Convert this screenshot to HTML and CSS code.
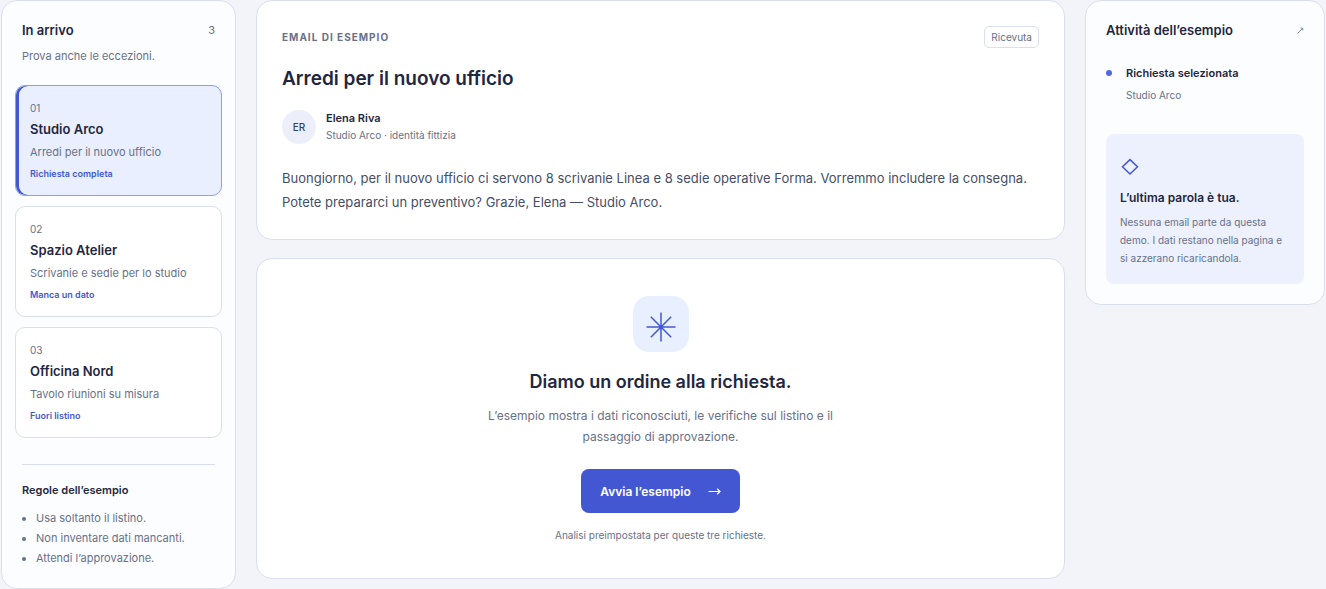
FILE: index.html
```
<!DOCTYPE html>
<html lang="it">
<head>
  <meta charset="UTF-8">
  <meta name="viewport" content="width=device-width, initial-scale=1">
  <title>Demo preventivi</title>
  <link rel="stylesheet" href="styles.css">
</head>
<body>
  <div class="workspace">

    <!-- Inbox -->
    <aside class="panel inbox">
      <div class="panel-head">
        <h2>In arrivo</h2>
        <span class="count">3</span>
      </div>
      <p class="inbox-hint">Prova anche le eccezioni.</p>

      <div class="request-list">
        <button type="button" class="request active" aria-pressed="true">
          <span class="request-number">01</span>
          <strong>Studio Arco</strong>
          <span class="request-subject">Arredi per il nuovo ufficio</span>
          <span class="request-tag">Richiesta completa</span>
        </button>
        <button type="button" class="request" aria-pressed="false">
          <span class="request-number">02</span>
          <strong>Spazio Atelier</strong>
          <span class="request-subject">Scrivanie e sedie per lo studio</span>
          <span class="request-tag">Manca un dato</span>
        </button>
        <button type="button" class="request" aria-pressed="false">
          <span class="request-number">03</span>
          <strong>Officina Nord</strong>
          <span class="request-subject">Tavolo riunioni su misura</span>
          <span class="request-tag">Fuori listino</span>
        </button>
      </div>

      <div class="rules">
        <h3>Regole dell’esempio</h3>
        <ul>
          <li>Usa soltanto il listino.</li>
          <li>Non inventare dati mancanti.</li>
          <li>Attendi l’approvazione.</li>
        </ul>
      </div>
    </aside>

    <main class="content">
      <!-- Email -->
      <article class="card email">
        <div class="email-top">
          <span class="eyebrow">Email di esempio</span>
          <span class="badge">Ricevuta</span>
        </div>
        <h1>Arredi per il nuovo ufficio</h1>
        <div class="sender">
          <span class="avatar">ER</span>
          <div class="sender-info">
            <strong>Elena Riva</strong>
            <span>Studio Arco · identità fittizia</span>
          </div>
        </div>
        <p class="email-body">Buongiorno, per il nuovo ufficio ci servono 8 scrivanie Linea e 8 sedie operative Forma. Vorremmo includere la consegna. Potete prepararci un preventivo? Grazie, Elena — Studio Arco.</p>
      </article>

      <!-- Start -->
      <section class="card start">
        <div class="start-icon">
          <svg width="32" height="32" viewBox="0 0 32 32" fill="none" stroke="currentColor" stroke-width="1.5" aria-hidden="true">
            <path d="M16 1.5v29M1.5 16h29M5.8 5.8l20.4 20.4M26.2 5.8L5.8 26.2"/>
          </svg>
        </div>
        <h2>Diamo un ordine alla richiesta.</h2>
        <p>L’esempio mostra i dati riconosciuti, le verifiche sul listino e il passaggio di approvazione.</p>
        <button type="button" class="start-button">
          Avvia l’esempio
          <svg width="14" height="10" viewBox="0 0 14 10" fill="none" stroke="currentColor" stroke-width="1.2" aria-hidden="true">
            <path d="M1.5 5.5H13M10.2 2.8l2.8 2.7-2.8 2.7"/>
          </svg>
        </button>
        <small>Analisi preimpostata per queste tre richieste.</small>
      </section>
    </main>

    <!-- Activity -->
    <aside class="panel activity">
      <div class="panel-head">
        <h2>Attività dell’esempio</h2>
        <svg width="8" height="8" viewBox="0 0 8 8" fill="none" stroke="currentColor" aria-hidden="true">
          <path d="M1.5 7.5l5-5M4.6 2.2h2.2v2.2" stroke-width="0.8"/>
        </svg>
      </div>
      <ol class="timeline">
        <li>
          <strong>Richiesta selezionata</strong>
          <span>Studio Arco</span>
        </li>
      </ol>
      <div class="notice">
        <svg width="20" height="20" viewBox="0 0 20 20" fill="none" stroke="currentColor" stroke-width="1.5" aria-hidden="true">
          <path d="M10 2.6l7.5 7.2-7.5 7.2-7.5-7.2z"/>
        </svg>
        <h3>L’ultima parola è tua.</h3>
        <p>Nessuna email parte da questa demo. I dati restano nella pagina e si azzerano ricaricandola.</p>
      </div>
    </aside>

  </div>
</body>
</html>
```
FILE: styles.css
```
:root {
  --ink: #1f2740;
  --muted: #68708a;
  --line: #d9dfee;
  --blue: #4457d2;
}

* {
  box-sizing: border-box;
}

body {
  margin: 0;
  background-color: #f3f4fa;
  color: var(--ink);
  font-family: Inter, "Liberation Sans", sans-serif;
  font-size: 13px;
}

h1, h2, h3, p, ul, ol {
  margin: 0;
}

button {
  font-family: inherit;
  cursor: pointer;
}

.workspace {
  display: grid;
  grid-template-columns: 235px minmax(0, 1fr) 240px;
  gap: 20px;
  align-items: start;
  padding: 0 1px;
}

.panel, .card {
  border: 1px solid var(--line);
  border-radius: 16px;
}

.panel {
  background-color: #fcfdff;
}

.card {
  background-color: #fff;
}

.panel-head {
  display: flex;
  justify-content: space-between;
  align-items: center;
  color: var(--muted);
}

.panel-head h2 {
  color: var(--ink);
  font-size: 13px;
  font-weight: 600;
  line-height: 20px;
}

/* Inbox */
.inbox {
  padding: 19px 13px 20px;
}

.inbox .panel-head, .inbox-hint {
  padding: 0 7px;
}

.count {
  font-size: 11px;
}

.inbox-hint {
  margin-top: 6px;
  color: var(--muted);
  font-size: 11px;
  line-height: 20px;
}

.request-list {
  display: flex;
  flex-direction: column;
  gap: 10px;
  margin-top: 19px;
}

.request {
  display: flex;
  flex-direction: column;
  padding: 13px 14px 10px;
  border: 1px solid var(--line);
  border-radius: 10px;
  background-color: #fff;
  color: var(--muted);
  text-align: left;
}

.request.active {
  border-color: #8c9fe8;
  background-color: #e9efff;
  box-shadow: inset 3px 0 0 var(--blue);
}

.request-number {
  font-size: 10px;
  line-height: 18px;
}

.request strong {
  color: var(--ink);
  font-size: 13px;
  font-weight: 600;
  line-height: 24px;
}

.request-subject {
  font-size: 11px;
  line-height: 22px;
}

.request-tag {
  color: var(--blue);
  font-size: 9px;
  font-weight: 600;
  line-height: 22px;
}

.rules {
  margin: 26px 7px 0;
  padding-top: 15px;
  border-top: 1px solid var(--line);
}

.rules h3 {
  font-size: 11px;
  font-weight: 600;
  line-height: 20px;
}

.rules ul {
  margin-top: 8px;
  padding-left: 14px;
  color: var(--muted);
  font-size: 11px;
  line-height: 20px;
}

/* Email */
.content {
  display: flex;
  flex-direction: column;
  gap: 18px;
}

.email {
  padding: 25px;
}

.email-top {
  display: flex;
  justify-content: space-between;
  align-items: center;
}

.eyebrow {
  color: var(--muted);
  font-size: 10px;
  font-weight: 700;
  letter-spacing: 1px;
  text-transform: uppercase;
}

.badge {
  padding: 0 6px;
  border: 1px solid var(--line);
  border-radius: 5px;
  color: var(--muted);
  font-size: 10px;
  line-height: 20px;
}

.email h1 {
  margin-top: 17px;
  font-size: 19px;
  font-weight: 600;
  line-height: 28px;
}

.sender {
  display: flex;
  align-items: center;
  gap: 10px;
  margin-top: 17px;
}

.avatar {
  width: 34px;
  border-radius: 50%;
  background-color: #eceffa;
  color: #38425c;
  font-size: 10px;
  font-weight: 500;
  line-height: 34px;
  text-align: center;
}

.sender-info {
  display: flex;
  flex-direction: column;
  color: var(--muted);
  font-size: 10px;
  line-height: 17px;
}

.sender-info strong {
  color: var(--ink);
  font-size: 11px;
  font-weight: 600;
}

.email-body {
  margin-top: 22px;
  color: #444e68;
  font-size: 13px;
  line-height: 24px;
}

/* Start */
.start {
  display: flex;
  flex-direction: column;
  align-items: center;
  padding: 37px 25px 33px;
  text-align: center;
}

.start-icon {
  display: grid;
  place-items: center;
  width: 56px;
  height: 56px;
  padding-top: 6px;
  border-radius: 16px;
  background-color: #e8f0ff;
  color: var(--blue);
}

.start h2 {
  margin-top: 16px;
  font-size: 18px;
  font-weight: 600;
  line-height: 28px;
}

.start p {
  max-width: 370px;
  margin-top: 9px;
  color: var(--muted);
  font-size: 12px;
  line-height: 21px;
}

.start-button {
  display: flex;
  align-items: center;
  gap: 16px;
  height: 44px;
  margin-top: 22px;
  padding: 0 19px;
  border: none;
  border-radius: 8px;
  background-color: var(--blue);
  color: #fff;
  font-size: 12px;
  font-weight: 600;
}

.start-button:hover {
  background-color: #3a4bc0;
}

.start small {
  margin-top: 12px;
  color: var(--muted);
  font-size: 10px;
  line-height: 20px;
}

/* Activity */
.activity {
  padding: 19px 20px 20px;
}

.timeline {
  margin-top: 22px;
  padding: 0;
  list-style: none;
}

.timeline li {
  position: relative;
  display: flex;
  flex-direction: column;
  padding-left: 20px;
  color: var(--muted);
  font-size: 10px;
  line-height: 22px;
}

.timeline li::before {
  content: "";
  position: absolute;
  top: 8px;
  left: 0;
  width: 6px;
  height: 6px;
  border-radius: 50%;
  background-color: #5068e8;
}

.timeline strong {
  color: var(--ink);
  font-size: 11px;
  font-weight: 600;
}

.notice {
  margin-top: 28px;
  padding: 23px 14px 17px;
  border-radius: 8px;
  background-color: #ecf1fd;
}

.notice svg {
  display: block;
  color: var(--blue);
}

.notice h3 {
  margin-top: 11px;
  font-size: 12px;
  font-weight: 600;
  line-height: 20px;
}

.notice p {
  margin-top: 5px;
  color: var(--muted);
  font-size: 10px;
  line-height: 18px;
}
```
